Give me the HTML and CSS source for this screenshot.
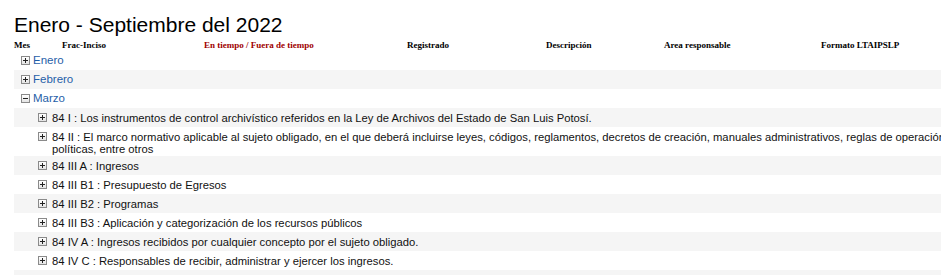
FILE: index.html
```html
<!DOCTYPE html>
<html lang="es">
<head>
<meta charset="utf-8">
<title>Enero - Septiembre del 2022</title>
<link rel="stylesheet" href="styles.css">
</head>
<body>
<div class="page">
  <h1 class="title">Enero - Septiembre del 2022</h1>
  <div class="head">
    <span>Mes</span>
    <span>Frac-Inciso</span>
    <span class="red">En tiempo / Fuera de tiempo</span>
    <span>Registrado</span>
    <span>Descripción</span>
    <span>Area responsable</span>
    <span>Formato LTAIPSLP</span>
  </div>
  <div class="list">
    <div class="row month"><span class="ico plus"></span><a class="mlink">Enero</a></div>
    <div class="row month alt"><span class="ico plus"></span><a class="mlink">Febrero</a></div>
    <div class="row month"><span class="ico minus"></span><a class="mlink">Marzo</a></div>
    <div class="row sub alt"><span class="ico plus"></span><span class="txt">84 I : Los instrumentos de control archivístico referidos en la Ley de Archivos del Estado de San Luis Potosí.</span></div>
    <div class="row sub"><span class="ico plus"></span><span class="txt">84 II : El marco normativo aplicable al sujeto obligado, en el que deberá incluirse leyes, códigos, reglamentos, decretos de creación, manuales administrativos, reglas de operación, políticas, entre otros</span></div>
    <div class="row sub alt"><span class="ico plus"></span><span class="txt">84 III A : Ingresos</span></div>
    <div class="row sub"><span class="ico plus"></span><span class="txt">84 III B1 : Presupuesto de Egresos</span></div>
    <div class="row sub alt"><span class="ico plus"></span><span class="txt">84 III B2 : Programas</span></div>
    <div class="row sub"><span class="ico plus"></span><span class="txt">84 III B3 : Aplicación y categorización de los recursos públicos</span></div>
    <div class="row sub alt"><span class="ico plus"></span><span class="txt">84 IV A : Ingresos recibidos por cualquier concepto por el sujeto obligado.</span></div>
    <div class="row sub"><span class="ico plus"></span><span class="txt">84 IV C : Responsables de recibir, administrar y ejercer los ingresos.</span></div>
    <div class="row sub alt"><span class="ico plus"></span><span class="txt">84 V : Deuda pública</span></div>
  </div>
</div>
</body>
</html>
```
FILE: styles.css
```css
html, body {
  margin: 0;
  padding: 0;
  background: #ffffff;
  overflow: hidden;
}
.page {
  padding: 0 0 0 14px;
  width: 962px;
}
.title {
  margin: 0;
  padding-top: 12px;
  font-family: "Liberation Sans", Arial, sans-serif;
  font-weight: normal;
  font-size: 21px;
  line-height: 25px;
  color: #000;
}
.head {
  display: grid;
  grid-template-columns: 48px 142px 203px 139px 118px 157px auto;
  font-family: "Liberation Serif", "Times New Roman", serif;
  font-weight: bold;
  font-size: 9px;
  line-height: 11px;
  color: #000;
  margin-top: 3px;
}
.head .red {
  color: #a00000;
}
.list {
  font-family: "Liberation Sans", Arial, sans-serif;
  color: #111;
}
.row {
  display: flex;
  align-items: flex-start;
}
.row.alt {
  background: #f5f5f5;
}
.row.month {
  padding: 3px 0 3px 7px;
  line-height: 13px;
  font-size: 11.5px;
}
.row.month .ico {
  margin-right: 3px;
}
.row.sub {
  padding: 4px 0 1px 24px;
  font-size: 11.25px;
}
.mlink {
  color: #1f5ea8;
  text-decoration: none;
}
.txt {
  flex: 1;
  line-height: 12px;
  min-height: 14px;
}
.ico {
  flex: none;
  box-sizing: border-box;
  width: 9px;
  height: 9px;
  margin-top: 2px;
  margin-right: 5px;
  border: 1px solid #8a8a8a;
  background: linear-gradient(#ffffff, #e4e4e4);
  position: relative;
}
.row.sub .ico {
  margin-top: 1px;
}
.ico::before {
  content: "";
  position: absolute;
  left: 1px;
  top: 3px;
  width: 5px;
  height: 1px;
  background: #222;
}
.ico.plus::after {
  content: "";
  position: absolute;
  left: 3px;
  top: 1px;
  width: 1px;
  height: 5px;
  background: #222;
}
```
